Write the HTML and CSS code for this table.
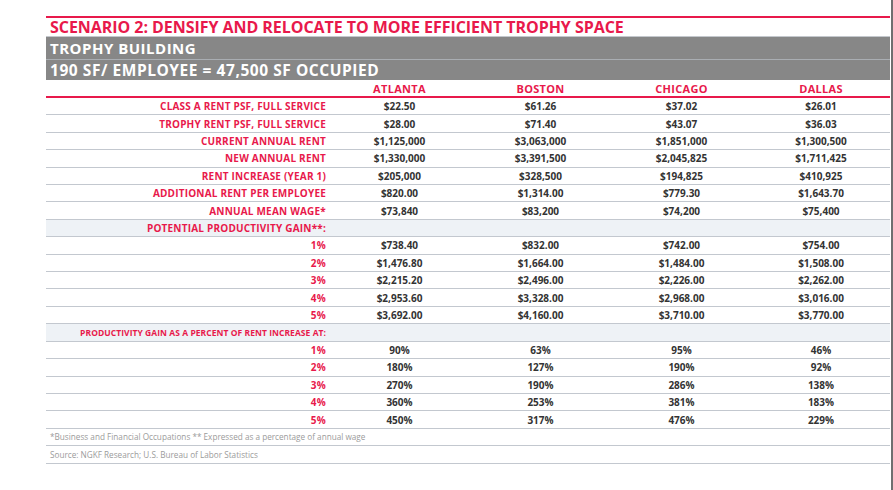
FILE: index.html
```html
<!DOCTYPE html>
<html>
<head>
<meta charset="utf-8">
<link rel="stylesheet" href="styles.css">
</head>
<body>
<div class="page">
  <div class="sheet">
    <div class="title">SCENARIO 2: DENSIFY AND RELOCATE TO MORE EFFICIENT TROPHY SPACE</div>
    <div class="band band-top">TROPHY BUILDING</div>
    <div class="band band-sub">190 SF/ EMPLOYEE = 47,500 SF OCCUPIED</div>
    <table class="data">
      <colgroup>
        <col class="c-label"><col class="c-city"><col class="c-city"><col class="c-city"><col class="c-last">
      </colgroup>
      <thead>
        <tr class="head"><th></th><th>ATLANTA</th><th>BOSTON</th><th>CHICAGO</th><th>DALLAS</th></tr>
      </thead>
      <tbody>
        <tr><th>CLASS A RENT PSF, FULL SERVICE</th><td>$22.50</td><td>$61.26</td><td>$37.02</td><td>$26.01</td></tr>
        <tr><th>TROPHY RENT PSF, FULL SERVICE</th><td>$28.00</td><td>$71.40</td><td>$43.07</td><td>$36.03</td></tr>
        <tr><th>CURRENT ANNUAL RENT</th><td>$1,125,000</td><td>$3,063,000</td><td>$1,851,000</td><td>$1,300,500</td></tr>
        <tr><th>NEW ANNUAL RENT</th><td>$1,330,000</td><td>$3,391,500</td><td>$2,045,825</td><td>$1,711,425</td></tr>
        <tr><th>RENT INCREASE (YEAR 1)</th><td>$205,000</td><td>$328,500</td><td>$194,825</td><td>$410,925</td></tr>
        <tr><th>ADDITIONAL RENT PER EMPLOYEE</th><td>$820.00</td><td>$1,314.00</td><td>$779.30</td><td>$1,643.70</td></tr>
        <tr><th>ANNUAL MEAN WAGE*</th><td>$73,840</td><td>$83,200</td><td>$74,200</td><td>$75,400</td></tr>
        <tr class="shade"><th>POTENTIAL PRODUCTIVITY GAIN**:</th><td></td><td></td><td></td><td></td></tr>
        <tr><th>1%</th><td>$738.40</td><td>$832.00</td><td>$742.00</td><td>$754.00</td></tr>
        <tr><th>2%</th><td>$1,476.80</td><td>$1,664.00</td><td>$1,484.00</td><td>$1,508.00</td></tr>
        <tr><th>3%</th><td>$2,215.20</td><td>$2,496.00</td><td>$2,226.00</td><td>$2,262.00</td></tr>
        <tr><th>4%</th><td>$2,953.60</td><td>$3,328.00</td><td>$2,968.00</td><td>$3,016.00</td></tr>
        <tr><th>5%</th><td>$3,692.00</td><td>$4,160.00</td><td>$3,710.00</td><td>$3,770.00</td></tr>
        <tr class="shade small"><th>PRODUCTIVITY GAIN AS A PERCENT OF RENT INCREASE AT:</th><td></td><td></td><td></td><td></td></tr>
        <tr><th>1%</th><td>90%</td><td>63%</td><td>95%</td><td>46%</td></tr>
        <tr><th>2%</th><td>180%</td><td>127%</td><td>190%</td><td>92%</td></tr>
        <tr><th>3%</th><td>270%</td><td>190%</td><td>286%</td><td>138%</td></tr>
        <tr><th>4%</th><td>360%</td><td>253%</td><td>381%</td><td>183%</td></tr>
        <tr><th>5%</th><td>450%</td><td>317%</td><td>476%</td><td>229%</td></tr>
        <tr class="note"><td colspan="5">*Business and Financial Occupations ** Expressed as a percentage of annual wage</td></tr>
        <tr class="note"><td colspan="5">Source: NGKF Research; U.S. Bureau of Labor Statistics</td></tr>
      </tbody>
    </table>
  </div>
</div>
</body>
</html>
```

FILE: styles.css
```css
html, body {
  margin: 0;
  padding: 0;
  background: #ffffff;
}

.page {
  width: 893px;
  height: 490px;
  box-sizing: border-box;
  padding: 16px 0 0 46px;
  border-right: 2px solid #6f6f6f;
  font-family: "Open Sans", "Liberation Sans", sans-serif;
}

.sheet {
  width: 844px;
}

.title {
  border-top: 2px solid #e8194b;
  height: 18px;
  padding: 0 0 0 4px;
  color: #e8194b;
  font-weight: 700;
  font-size: 16px;
  line-height: 19px;
  letter-spacing: -0.05px;
  white-space: nowrap;
}

.band {
  background: #878787;
  color: #ffffff;
  font-weight: 700;
  font-size: 15px;
  line-height: 20px;
  height: 20px;
  padding-left: 4px;
  letter-spacing: 0.5px;
  border-top: 1px solid #a9adb2;
  white-space: nowrap;
}

.band-top {
  height: 22px;
  line-height: 22px;
  border-top: 1px solid #c4c8cd;
}

.band-sub {
  font-size: 15.5px;
  letter-spacing: 0.55px;
}

.data {
  width: 844px;
  border-collapse: collapse;
  table-layout: fixed;
}

.c-label { width: 283px; }
.c-city { width: 141px; }
.c-last { width: 138px; }

.data th,
.data td {
  padding: 0;
  height: 16.42px;
  border-bottom: 1px solid #c3c8cf;
  font-size: 10px;
  font-weight: 700;
  white-space: nowrap;
}

.data tbody th {
  text-align: right;
  padding-right: 3px;
  color: #e8194b;
  letter-spacing: 0.2px;
}

.data td {
  text-align: center;
  color: #333333;
}

.head th {
  height: 16px;
  border-bottom: 2px solid #e8194b;
  color: #e8194b;
  font-size: 11px;
  text-align: center;
  letter-spacing: 0.3px;
}

.shade th,
.shade td {
  background: #eef2f6;
}

.data .small th {
  font-size: 8.5px;
  letter-spacing: 0.05px;
}

.note td {
  text-align: left;
  padding-left: 4px;
  color: #9b9b9b;
  font-size: 8.2px;
  font-weight: 400;
}
```
